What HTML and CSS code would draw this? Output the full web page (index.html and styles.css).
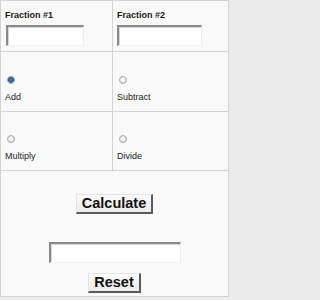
FILE: index.html
```html
<!DOCTYPE html>
<html lang="en">
<head>
<meta charset="utf-8">
<title>Fraction Calculator</title>
<link rel="stylesheet" href="styles.css">
</head>
<body>
<form class="calc">
  <div class="cell cell-left">
    <label class="title" for="f1">Fraction #1</label>
    <input id="f1" class="field field-1" type="text">
  </div>
  <div class="cell cell-right">
    <label class="title" for="f2">Fraction #2</label>
    <input id="f2" class="field field-2" type="text">
  </div>
  <label class="cell cell-left op op-top">
    <input class="radio" type="radio" name="op" value="add" checked>
    <span class="op-label">Add</span>
  </label>
  <label class="cell cell-right op op-top">
    <input class="radio" type="radio" name="op" value="subtract">
    <span class="op-label">Subtract</span>
  </label>
  <label class="cell cell-left op op-bottom">
    <input class="radio" type="radio" name="op" value="multiply">
    <span class="op-label">Multiply</span>
  </label>
  <label class="cell cell-right op op-bottom">
    <input class="radio" type="radio" name="op" value="divide">
    <span class="op-label">Divide</span>
  </label>
  <div class="cell actions">
    <button class="btn" type="button">Calculate</button>
    <input class="field result" type="text">
    <button class="btn btn-reset" type="reset">Reset</button>
  </div>
</form>
</body>
</html>
```

FILE: styles.css
```css
html, body {
  margin: 0;
  padding: 0;
}

body {
  background: #ececec;
  font-family: "Liberation Sans", Arial, sans-serif;
  color: #222;
  width: 230px;
  height: 300px;
}

.calc {
  display: grid;
  grid-template-columns: 112px 115px;
  grid-template-rows: 51px 60px 59px 125px;
  width: 229px;
  height: 297px;
  box-sizing: border-box;
  margin: 0;
  border: 1px solid #d2d2d2;
  background: #f9f9f9;
}

.cell {
  box-sizing: border-box;
  border-bottom: 1px solid #d2d2d2;
  padding-left: 4px;
  display: flex;
  flex-direction: column;
  align-items: flex-start;
}

.cell-left {
  border-right: 1px solid #d2d2d2;
}

.cell:first-child,
.cell-right:nth-child(2) {
  padding-top: 9px;
}

.title {
  font-size: 9px;
  line-height: 11px;
  font-weight: bold;
  color: #1a1a1a;
}

.field {
  box-sizing: border-box;
  height: 21px;
  margin: 4px 0 0 1px;
  padding: 0;
  background: #fff;
  border-style: solid;
  border-width: 2px 1px 1px 2px;
  border-color: #8a8a8a #ececec #f2f2f2 #8a8a8a;
  box-shadow: inset 1px 1px 0 #d6d6d6;
  font-family: inherit;
}

.field-1 {
  width: 78px;
}

.field-2 {
  width: 85px;
  margin-left: 0;
}

.op {
  cursor: pointer;
}

.op-top {
  padding-top: 24px;
}

.op-bottom {
  padding-top: 23px;
}

.radio {
  -webkit-appearance: none;
  appearance: none;
  display: block;
  width: 8px;
  height: 8px;
  margin: 0 0 0 2px;
  box-sizing: border-box;
  border-radius: 50%;
  border: 1px solid #a9a9a9;
  background: radial-gradient(circle at 50% 40%, #ffffff 0%, #eeeeee 45%, #d4d4d4 100%);
}

.radio:checked {
  border-color: #9a9a9a;
  background: radial-gradient(circle at 50% 45%, #4d8fd6 0%, #1f5fa6 45%, #174b86 62%, #cfd6de 70%, #e6e6e6 100%);
}

.op-label {
  margin-top: 8px;
  font-size: 9px;
  line-height: 11px;
  color: #222;
}

.actions {
  grid-column: 1 / -1;
  border-bottom: none;
  padding: 23px 0 0 0;
  align-items: center;
}

.btn {
  box-sizing: border-box;
  height: 20px;
  margin: 0;
  padding: 0 5px;
  font-family: "Liberation Sans", Arial, sans-serif;
  font-size: 14.5px;
  font-weight: bold;
  line-height: 17px;
  color: #111;
  background: linear-gradient(#fbfbfb, #ececec);
  border-style: solid;
  border-width: 1px 2px 2px 1px;
  border-color: #e4e4e4 #5a5a5a #5a5a5a #e4e4e4;
  border-radius: 0;
}

.result {
  width: 132px;
  margin: 28px 0 0 0;
}

.btn-reset {
  margin-top: 10px;
}
```
